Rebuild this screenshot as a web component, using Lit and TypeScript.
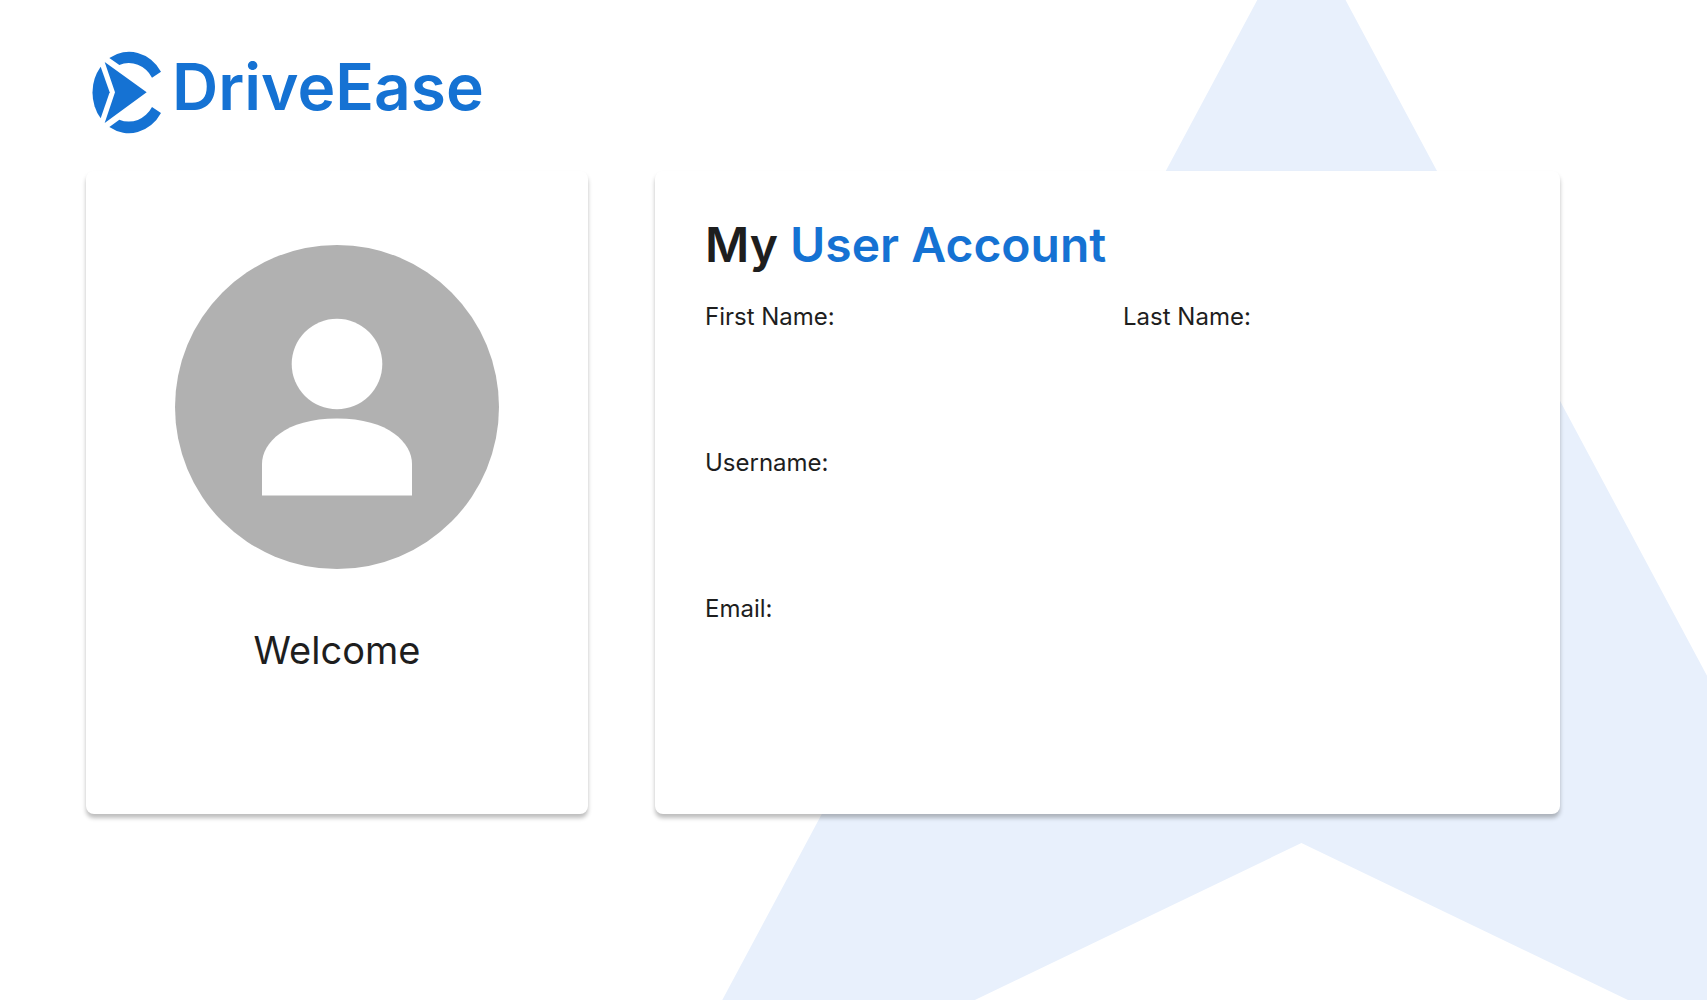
import { LitElement, html, css } from "lit";
import { customElement } from "lit/decorators.js";

@customElement("app-logo")
class AppLogo extends LitElement {
  static styles = css`
    :host { display: block; }
    .logo {
      display: inline-flex;
      align-items: flex-start;
      gap: 10px;
      color: #1572d3;
      text-decoration: none;
    }
    .mark { width: 70px; height: 84px; display: block; }
    .word { font-size: 64px; line-height: 72px; font-weight: 600; }
  `;

  render() {
    return html`
      <a class="logo" href="/">
        <svg class="mark" viewBox="36 33 210 252" fill="currentColor" aria-hidden="true">
          <path d="M88 54A112 124 0 0 1 243 95L216 113A80 87 0 0 0 118 75Z" />
          <path d="M88 261A112 124 0 0 0 243 219L216 201A80 87 0 0 1 118 239Z" />
          <path d="M74 66L200 157L74 249L105 157Z" />
          <path d="M62 80A112 124 0 0 0 62 235L89 157Z" />
        </svg>
        <span class="word">DriveEase</span>
      </a>
    `;
  }
}

@customElement("profile-card")
class ProfileCard extends LitElement {
  static styles = css`
    :host {
      display: flex;
      flex-direction: column;
      align-items: center;
      gap: 56px;
      padding: 74px 24px 24px;
    }
    .avatar { width: 324px; max-width: 100%; display: block; }
    .greeting { margin: 0; font-size: 38px; line-height: 50px; font-weight: 400; }
  `;

  render() {
    return html`
      <svg class="avatar" viewBox="0 0 324 324" aria-hidden="true">
        <circle cx="162" cy="162" r="162" fill="#b1b1b1" />
        <circle cx="162" cy="119" r="45.3" fill="#fff" />
        <path d="M87 250.500V219C87 198 110 173.500 162 173.500S237 198 237 219V250.500Z" fill="#fff" />
      </svg>
      <p class="greeting">Welcome</p>
    `;
  }
}

@customElement("account-details")
class AccountDetails extends LitElement {
  static styles = css`
    :host { display: block; padding: 44px 50px; }
    .title { margin: 0; font-size: 48px; line-height: 60px; font-weight: 600; }
    .accent { color: #1572d3; }
    .fields {
      display: grid;
      grid-template-columns: 418fr 387fr;
      grid-auto-rows: 146px;
      margin: 26px 0 0;
    }
    .field { grid-column: 1; }
    .field.second { grid-column: 2; }
    .label { font-size: 24px; line-height: 32px; }
    .value { margin: 0; font-size: 24px; line-height: 32px; }
  `;

  private fields = [
    { label: "First Name", value: "", second: false },
    { label: "Last Name", value: "", second: true },
    { label: "Username", value: "", second: false },
    { label: "Email", value: "", second: false },
  ];

  render() {
    return html`
      <h1 class="title">My <span class="accent">User Account</span></h1>
      <dl class="fields">
        ${this.fields.map(
          (f) => html`
            <div class="field ${f.second ? "second" : ""}">
              <dt class="label">${f.label}:</dt>
              <dd class="value">${f.value}</dd>
            </div>
          `
        )}
      </dl>
    `;
  }
}

@customElement("app-root")
class AppRoot extends LitElement {
  static styles = css`
    :host {
      display: block;
      position: relative;
      min-height: 100vh;
      box-sizing: border-box;
      overflow: hidden;
      background: #fff;
      color: #1e1e1e;
      font-family: Inter, "Open Sans", sans-serif;
    }
    .backdrop {
      position: absolute;
      inset: 0;
      width: 100%;
      height: 100%;
    }
    .page { position: relative; padding: 51px 147px 51px 86px; }
    .header { padding: 0 6px 36px; }
    app-logo { height: 84px; }
    .cards {
      display: grid;
      grid-template-columns: 502fr 905fr;
      gap: 67px;
    }
    .card {
      min-height: 643px;
      box-sizing: border-box;
      background: #fff;
      border-radius: 8px;
      box-shadow: 0 4px 4px rgba(0, 0, 0, 0.26);
    }
  `;

  render() {
    return html`
      <svg class="backdrop" viewBox="0 0 1707 1000" preserveAspectRatio="xMaxYMin slice" aria-hidden="true">
        <polygon points="1301.4,-82.5 1968,1163.5 1301.4,843 634.800,1163.5" fill="#e8f0fc" />
      </svg>
      <div class="page">
        <header class="header"><app-logo></app-logo></header>
        <main class="cards">
          <profile-card class="card"></profile-card>
          <account-details class="card"></account-details>
        </main>
      </div>
    `;
  }
}
